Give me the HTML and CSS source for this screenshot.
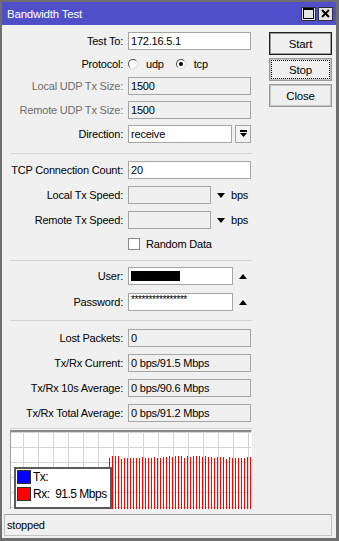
FILE: index.html
```html
<!DOCTYPE html>
<html lang="en">
<head>
    <meta charset="UTF-8">
    <title>Bandwidth Test</title>
    <link rel="stylesheet" href="styles.css">
</head>
<body>
    <div class="window">
        <div class="titlebar">
            <span class="title">Bandwidth Test</span>
            <div class="title-btns">
                <span class="tbtn">
                    <svg width="11" height="11" viewBox="0 0 11 11"><rect x="0.5" y="0.5" width="10" height="10" fill="none" stroke="#000"/><rect x="0" y="0" width="11" height="2" fill="#000"/></svg>
                </span>
                <span class="tbtn">
                    <svg width="9" height="9" viewBox="0 0 9 9"><path d="M1 1L8 8M8 1L1 8" stroke="#000" stroke-width="2"/></svg>
                </span>
            </div>
        </div>

        <div class="main">
            <div class="form">
                <div class="group g1">
                    <div class="row">
                        <label>Test To:</label>
                        <div class="field full">172.16.5.1</div>
                    </div>
                    <div class="row short">
                        <label>Protocol:</label>
                        <span class="radio"></span><span class="radio-text udp">udp</span>
                        <span class="radio on"></span><span class="radio-text">tcp</span>
                    </div>
                    <div class="row">
                        <label class="off">Local UDP Tx Size:</label>
                        <div class="field full ro">1500</div>
                    </div>
                    <div class="row">
                        <label class="off">Remote UDP Tx Size:</label>
                        <div class="field full ro">1500</div>
                    </div>
                    <div class="row">
                        <label>Direction:</label>
                        <div class="field combo">receive</div>
                        <span class="dd">
                            <svg width="7" height="8" viewBox="0 0 7 8"><rect x="0" y="0" width="7" height="2"/><path d="M0 3h7l-3.5 4z"/></svg>
                        </span>
                    </div>
                </div>

                <div class="sep s1"></div>

                <div class="group g2">
                    <div class="row">
                        <label>TCP Connection Count:</label>
                        <div class="field full">20</div>
                    </div>
                    <div class="row">
                        <label>Local Tx Speed:</label>
                        <div class="field speed ro"></div>
                        <span class="arrow-down"></span>
                        <span class="unit">bps</span>
                    </div>
                    <div class="row">
                        <label>Remote Tx Speed:</label>
                        <div class="field speed ro"></div>
                        <span class="arrow-down"></span>
                        <span class="unit">bps</span>
                    </div>
                    <div class="row short check-row">
                        <span class="checkbox"></span>
                        <span class="check-text">Random Data</span>
                    </div>
                </div>

                <div class="sep s2"></div>

                <div class="group g3">
                    <div class="row">
                        <label>User:</label>
                        <div class="field login"><span class="redact"></span></div>
                        <span class="arrow-up"></span>
                    </div>
                    <div class="row">
                        <label>Password:</label>
                        <div class="field login"><span class="stars">****************</span></div>
                        <span class="arrow-up"></span>
                    </div>
                </div>

                <div class="sep s3"></div>

                <div class="group g4">
                    <div class="row">
                        <label>Lost Packets:</label>
                        <div class="field full ro">0</div>
                    </div>
                    <div class="row">
                        <label>Tx/Rx Current:</label>
                        <div class="field full ro">0 bps/91.5 Mbps</div>
                    </div>
                    <div class="row">
                        <label>Tx/Rx 10s Average:</label>
                        <div class="field full ro">0 bps/90.6 Mbps</div>
                    </div>
                    <div class="row">
                        <label>Tx/Rx Total Average:</label>
                        <div class="field full ro">0 bps/91.2 Mbps</div>
                    </div>
                </div>

                <div class="sep s4"></div>

                <div class="graph">
                    <div class="bars" id="bars"></div>
                    <div class="legend">
                        <div class="legend-row"><span class="swatch tx"></span>Tx:</div>
                        <div class="legend-row"><span class="swatch rx"></span>Rx:  91.5 Mbps</div>
                    </div>
                </div>
            </div>

            <div class="buttons">
                <button class="btn default">Start</button>
                <button class="btn focus">Stop</button>
                <button class="btn">Close</button>
            </div>
        </div>

        <div class="status">stopped</div>
    </div>

    <script>
        // Rx samples, bar heights in px
        var rx = [51,53,53,53,50,51,51,51,51,51,51,52,51,51,51,52,51,51,52,52,53,52,53,53,
                  53,51,53,52,53,53,53,52,53,52,52,51,52,52,52,50,52,51,51,51,51,51,52,52];
        var bars = document.getElementById('bars');
        rx.forEach(function(h) {
            var b = document.createElement('span');
            b.className = 'bar';
            b.style.height = h + 'px';
            bars.appendChild(b);
        });
    </script>
</body>
</html>
```

FILE: styles.css
```css
* {
    box-sizing: border-box;
}

body {
    margin: 0;
    font-family: "Liberation Sans", Arial, sans-serif;
    font-size: 11px;
    letter-spacing: -0.2px;
    color: #000;
    background-color: #fff;
}

.window {
    width: 339px;
    height: 541px;
    border: 2px solid #6e6e6e;
    border-right-width: 3px;
    border-bottom-width: 3px;
    background-color: #f0f0f0;
    overflow: hidden;
}

.titlebar {
    height: 23px;
    background-color: #4f50c9;
    color: #fff;
    display: flex;
    align-items: center;
    justify-content: space-between;
    padding: 0 3px 0 5px;
}

.title {
    font-size: 11.5px;
}

.title-btns {
    display: flex;
    gap: 2px;
}

.tbtn {
    width: 15px;
    height: 14px;
    background-color: #e4e4e4;
    border: 1px solid #303030;
    display: flex;
    align-items: center;
    justify-content: center;
}

.main {
    display: flex;
    gap: 17px;
    padding: 7px 4px 0 8px;
}

.form {
    width: 242px;
}

.group {
    display: flex;
    flex-direction: column;
}

.g1 { gap: 6px; }
.g2 { gap: 7px; }
.g3 { gap: 8px; }
.g4 { gap: 7px; }

.row {
    display: flex;
    align-items: center;
    height: 18px;
}

.row.short {
    height: 15px;
}

.row label {
    width: 113px;
    margin-right: 5px;
    text-align: right;
    white-space: nowrap;
}

.row label.off {
    color: #6d6d6d;
}

.field {
    height: 18px;
    border: 1px solid #a5a5a5;
    background-color: #fff;
    padding: 0 2px;
    line-height: 16px;
    white-space: nowrap;
    overflow: hidden;
}

.field.ro {
    background-color: #f0f0f0;
}

.full { width: 123px; }
.combo { width: 104px; }
.speed { width: 83px; }
.login { width: 105px; }

.dd {
    width: 16px;
    height: 18px;
    margin-left: 3px;
    border: 1px solid #a5a5a5;
    background-color: #f4f4f4;
    display: flex;
    align-items: center;
    justify-content: center;
}

.radio {
    width: 10px;
    height: 10px;
    border-radius: 50%;
    border: 1px solid;
    border-color: #505050 #d8d8d8 #d8d8d8 #505050;
    background-color: #fff;
    display: flex;
    align-items: center;
    justify-content: center;
}

.radio.on::after {
    content: "";
    width: 4px;
    height: 4px;
    border-radius: 50%;
    background-color: #000;
}

.radio-text {
    margin-left: 8px;
}

.radio-text.udp {
    margin-right: 12px;
}

.arrow-down {
    margin-left: 6px;
    border-left: 4.5px solid transparent;
    border-right: 4.5px solid transparent;
    border-top: 5px solid #000;
}

.arrow-up {
    margin-left: 6px;
    border-left: 4.5px solid transparent;
    border-right: 4.5px solid transparent;
    border-bottom: 5px solid #000;
}

.unit {
    margin-left: 6px;
}

.check-row {
    padding-left: 118px;
}

.checkbox {
    width: 12px;
    height: 12px;
    border: 1px solid #8a8a8a;
    background-color: #fff;
}

.check-text {
    margin-left: 6px;
}

.redact {
    display: block;
    width: 49px;
    height: 10px;
    margin-top: 3px;
    background-color: #000;
}

.stars {
    font-size: 10px;
    letter-spacing: -0.4px;
    line-height: 12px;
    display: block;
}

.sep {
    height: 1px;
    background-color: #d5d5d5;
}

.s1 { margin: 10px 0 7px; }
.s2 { margin: 9px 0 6px; }
.s3 { margin: 9px 0 8px; }
.s4 { margin: 6px 0 1px; }

.graph {
    position: relative;
    height: 79px;
    background-color: #fff;
    border-top: 2px solid #8a8a8a;
    border-left: 1px solid #a0a0a0;
    border-right: 1px solid #fff;
    background-image:
        linear-gradient(to right, transparent 14px, #d4d4d4 14px),
        linear-gradient(to bottom, transparent 14px, #d4d4d4 14px);
    background-size: 15px 15px;
    background-position: -2px 1px;
    display: flex;
    justify-content: flex-end;
    align-items: flex-end;
}

.bars {
    display: flex;
    align-items: flex-end;
    gap: 2px;
}

.bar {
    width: 1px;
    background-color: #ff0000;
}

.legend {
    position: absolute;
    left: 3px;
    bottom: 0;
    width: 98px;
    height: 42px;
    background-color: #fff;
    border: 2px solid #5a5a5a;
    padding: 1px 1px;
    display: flex;
    flex-direction: column;
    gap: 3px;
    font-size: 12px;
    letter-spacing: -0.5px;
    white-space: pre;
}

.legend-row {
    display: flex;
    align-items: center;
    height: 14px;
}

.swatch {
    width: 14px;
    height: 14px;
    border: 1px solid #303030;
    margin-right: 2px;
}

.swatch.tx { background-color: #0000ff; }
.swatch.rx { background-color: #ff0000; }

.buttons {
    width: 63px;
    display: flex;
    flex-direction: column;
    gap: 3px;
}

.btn {
    height: 23px;
    font-family: inherit;
    font-size: 11.5px;
    letter-spacing: -0.2px;
    color: #000;
    background-color: #f0f0f0;
    border: 1px solid #9a9a9a;
    box-shadow: inset 0 0 0 1px #c4c4c4;
    padding: 0;
}

.btn.default {
    border-color: #1e1e1e;
    box-shadow: inset 0 0 0 1px #9a9a9a;
}

.btn.focus {
    outline: 1px dotted #000;
    outline-offset: -3px;
}

.status {
    height: 22px;
    margin: 5px 4px 0 2px;
    border: 1px solid #c2c2c2;
    border-top-color: #a0a0a0;
    padding-left: 2px;
    line-height: 20px;
}
```
